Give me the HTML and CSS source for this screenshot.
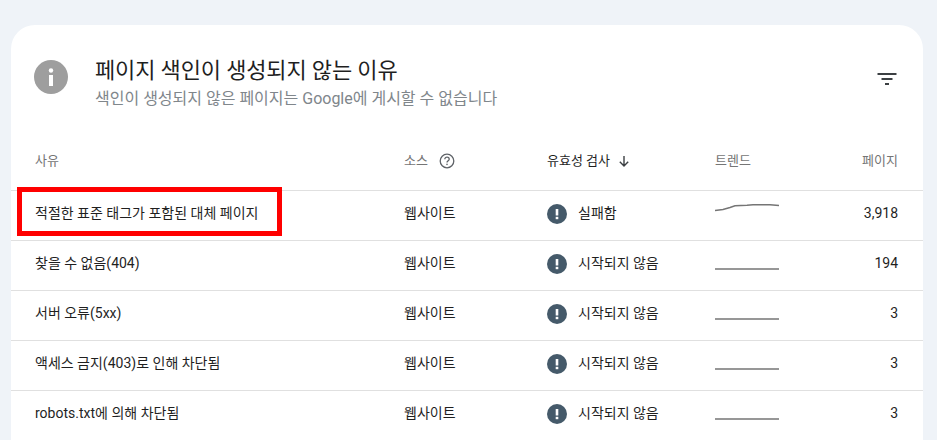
FILE: index.html
```html
<!DOCTYPE html>
<html lang="ko">
<head>
  <meta charset="UTF-8">
  <title>페이지 색인이 생성되지 않는 이유</title>
  <link rel="stylesheet" href="styles.css">
</head>
<body>
  <div class="card">
    <div class="card-head">
      <svg class="info-icon" width="34" height="34" viewBox="0 0 34 34">
        <circle cx="17" cy="17" r="17" fill="#9e9e9e"/>
        <rect x="15" y="15" width="4" height="11" fill="#fff"/>
        <circle cx="17" cy="10.5" r="2.2" fill="#fff"/>
      </svg>
      <div class="titles">
        <h1 class="title">페이지 색인이 생성되지 않는 이유</h1>
        <p class="subtitle">색인이 생성되지 않은 페이지는 Google에 게시할 수 없습니다</p>
      </div>
      <svg class="filter-icon" width="24" height="24" viewBox="0 0 24 24">
        <path d="M2.500 6h19v2h-19zM6.500 11h11v2h-11zM10 16h4v2h-4z" fill="#3c4043"/>
      </svg>
    </div>

    <div class="row row-head">
      <div>사유</div>
      <div class="with-icon">소스
        <svg width="16" height="16" viewBox="0 0 16 16" fill="none">
          <circle cx="8" cy="8" r="6.800" stroke="#5f6368" stroke-width="1.300"/>
          <path d="M5.800 6.300c0-1.300 1-2.100 2.200-2.100s2.200.8 2.200 2c0 1.500-2.200 1.600-2.200 3.300" stroke="#5f6368" stroke-width="1.300"/>
          <rect x="7.300" y="10.700" width="1.400" height="1.400" fill="#5f6368"/>
        </svg>
      </div>
      <div class="with-icon sorted">유효성 검사
        <svg width="12" height="12" viewBox="0 0 12 12" fill="none">
          <path d="M6 1v10M1.800 6.800 6 11l4.200-4.200" stroke="#3c4043" stroke-width="1.400"/>
        </svg>
      </div>
      <div>트렌드</div>
      <div class="num">페이지</div>
    </div>

    <div class="row">
      <div class="reason">적절한 표준 태그가 포함된 대체 페이지<span class="highlight"></span></div>
      <div>웹사이트</div>
      <div class="status">
        <svg class="warn-icon" width="20" height="20" viewBox="0 0 20 20"><circle cx="10" cy="10" r="10" fill="#455a6a"/><rect x="8.700" y="5" width="2.600" height="6.500" fill="#fff"/><rect x="8.700" y="12.800" width="2.600" height="2.400" fill="#fff"/></svg>
        실패함
      </div>
      <svg class="spark" width="64" height="20" viewBox="0 0 64 20" fill="none"><path d="M0 6.500 8 5.500 15 3.500 20 1.800 32 1.300 38 .8H55L64 1.600" stroke="#757575" stroke-width="1.500"/></svg>
      <div class="num">3,918</div>
    </div>

    <div class="row">
      <div>찾을 수 없음(404)</div>
      <div>웹사이트</div>
      <div class="status">
        <svg class="warn-icon" width="20" height="20" viewBox="0 0 20 20"><circle cx="10" cy="10" r="10" fill="#455a6a"/><rect x="8.700" y="5" width="2.600" height="6.500" fill="#fff"/><rect x="8.700" y="12.800" width="2.600" height="2.400" fill="#fff"/></svg>
        시작되지 않음
      </div>
      <svg class="spark" width="64" height="20" viewBox="0 0 64 20" fill="none"><path d="M0 15H64" stroke="#757575" stroke-width="1.500"/></svg>
      <div class="num">194</div>
    </div>

    <div class="row">
      <div>서버 오류(5xx)</div>
      <div>웹사이트</div>
      <div class="status">
        <svg class="warn-icon" width="20" height="20" viewBox="0 0 20 20"><circle cx="10" cy="10" r="10" fill="#455a6a"/><rect x="8.700" y="5" width="2.600" height="6.500" fill="#fff"/><rect x="8.700" y="12.800" width="2.600" height="2.400" fill="#fff"/></svg>
        시작되지 않음
      </div>
      <svg class="spark" width="64" height="20" viewBox="0 0 64 20" fill="none"><path d="M0 15H64" stroke="#757575" stroke-width="1.500"/></svg>
      <div class="num">3</div>
    </div>

    <div class="row">
      <div>액세스 금지(403)로 인해 차단됨</div>
      <div>웹사이트</div>
      <div class="status">
        <svg class="warn-icon" width="20" height="20" viewBox="0 0 20 20"><circle cx="10" cy="10" r="10" fill="#455a6a"/><rect x="8.700" y="5" width="2.600" height="6.500" fill="#fff"/><rect x="8.700" y="12.800" width="2.600" height="2.400" fill="#fff"/></svg>
        시작되지 않음
      </div>
      <svg class="spark" width="64" height="20" viewBox="0 0 64 20" fill="none"><path d="M0 15H64" stroke="#757575" stroke-width="1.500"/></svg>
      <div class="num">3</div>
    </div>

    <div class="row">
      <div>robots.txt에 의해 차단됨</div>
      <div>웹사이트</div>
      <div class="status">
        <svg class="warn-icon" width="20" height="20" viewBox="0 0 20 20"><circle cx="10" cy="10" r="10" fill="#455a6a"/><rect x="8.700" y="5" width="2.600" height="6.500" fill="#fff"/><rect x="8.700" y="12.800" width="2.600" height="2.400" fill="#fff"/></svg>
        시작되지 않음
      </div>
      <svg class="spark" width="64" height="20" viewBox="0 0 64 20" fill="none"><path d="M0 15H64" stroke="#757575" stroke-width="1.500"/></svg>
      <div class="num">3</div>
    </div>
  </div>
</body>
</html>
```

FILE: styles.css
```css
html, body {
  height: 100%;
  overflow: hidden;
}
body {
  margin: 0;
  padding: 25px 14px 0 11px;
  box-sizing: border-box;
  background-color: #eff3f8;
  font-family: Roboto, "Noto Sans CJK KR", sans-serif;
  font-size: 14px;
  line-height: 20px;
  color: #1f1f1f;
}
.card {
  background-color: #fff;
  border-radius: 24px 24px 0 0;
  height: 415px;
  overflow: hidden;
}
.card-head {
  display: flex;
  align-items: flex-start;
  height: 115px;
  padding: 29px 24px 0 23px;
  box-sizing: border-box;
}
.info-icon {
  margin-top: 6px;
  flex: none;
}
.titles {
  margin-left: 27px;
  flex: 1;
}
.title {
  margin: 0;
  font-size: 22px;
  font-weight: 400;
  line-height: 33px;
  letter-spacing: -0.15px;
}
.subtitle {
  margin: 0;
  font-size: 16px;
  line-height: 24px;
  color: #80868b;
}
.filter-icon {
  margin-top: 13px;
  flex: none;
}
.row {
  display: grid;
  grid-template-columns: 369px 143px 168px 64px 1fr;
  align-items: center;
  height: 50px;
  box-sizing: border-box;
  padding: 0 25px 5px 24px;
  border-top: 1px solid #e0e0e0;
}
.row-head {
  border-top: none;
  padding-bottom: 8px;
  color: #757575;
  font-size: 13px;
}
.with-icon {
  display: flex;
  align-items: center;
  gap: 11px;
}
.sorted {
  color: #1f1f1f;
  gap: 8px;
}
.num {
  text-align: right;
}
.reason {
  position: relative;
}
.highlight {
  position: absolute;
  left: -18px;
  top: -16px;
  width: 265px;
  height: 49px;
  box-sizing: border-box;
  border: 5px solid #f00;
}
.status {
  display: flex;
  align-items: center;
  gap: 11px;
}
.warn-icon {
  flex: none;
  margin-top: 2px;
}
.spark {
  display: block;
  margin-top: 2px;
}
```
